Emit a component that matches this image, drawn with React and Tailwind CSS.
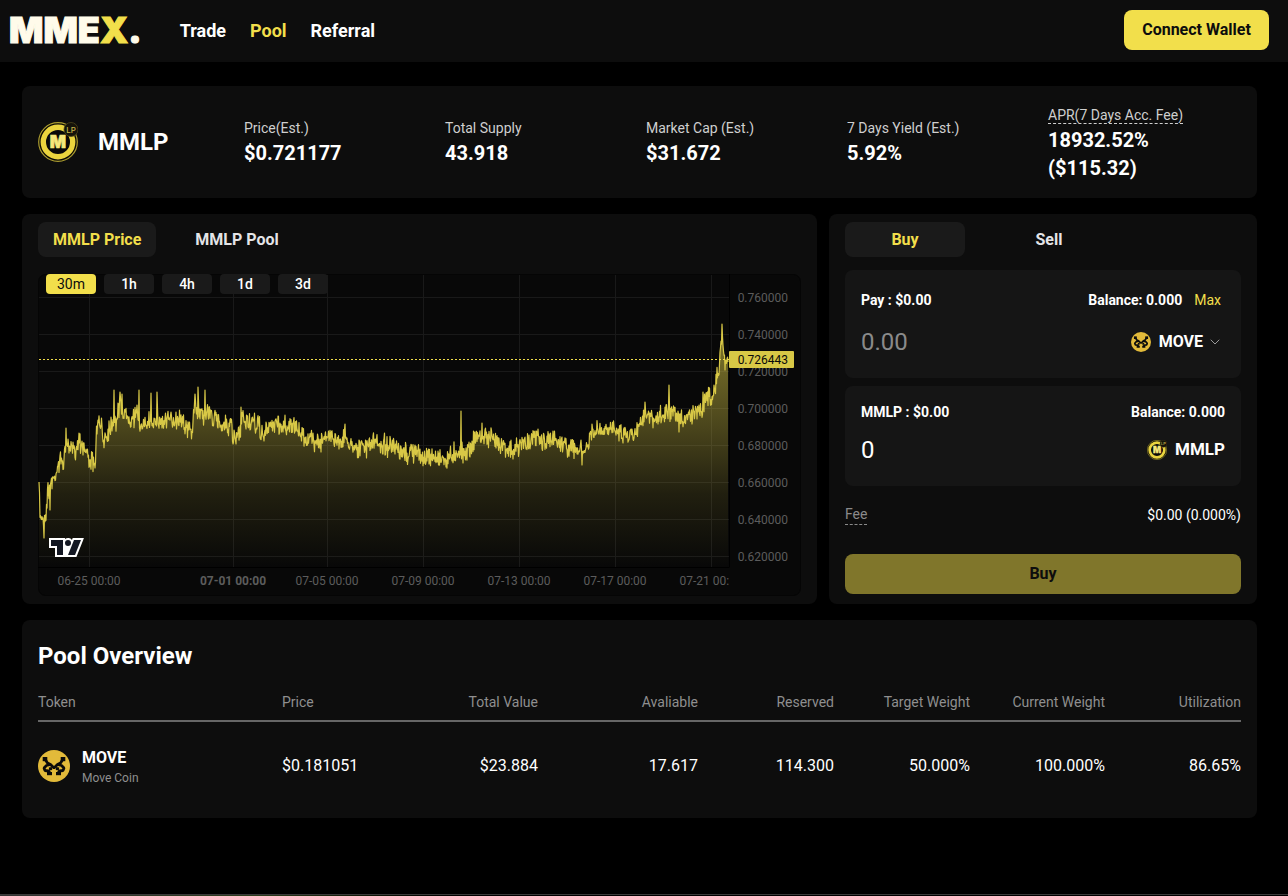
import React from "react";
import { ChevronDown } from "lucide-react";

// Price trend: [x, y] anchors in plot coordinates, y growing downwards.
const TREND = [
  [1, 210], [2, 240], [4, 242], [6, 252], [7, 240], [9, 232], [10, 212], [12, 222], [13, 208], [16, 206], [19, 194],
  [22, 188], [27, 184], [29, 168], [32, 174], [38, 174], [42, 166], [46, 174], [51, 184], [57, 194], [59, 150],
  [62, 152], [66, 164], [71, 154], [75, 146], [78, 148], [82, 132], [85, 138], [92, 145], [100, 142], [105, 157],
  [110, 149], [113, 145], [119, 144], [124, 148], [132, 147], [144, 144], [149, 156], [154, 154], [157, 134],
  [162, 138], [167, 140], [171, 138], [176, 146], [186, 149], [194, 153], [195, 166], [202, 162], [204, 146],
  [212, 148], [220, 152], [226, 162], [229, 156], [237, 148], [242, 153], [252, 150], [262, 158], [272, 166],
  [282, 166], [292, 162], [307, 167], [322, 174], [337, 168], [352, 172], [363, 180], [374, 178], [382, 180],
  [391, 184], [402, 182], [407, 186], [417, 177], [425, 179], [432, 173], [438, 163], [450, 163], [460, 167],
  [468, 172], [475, 178], [482, 170], [494, 166], [502, 166], [508, 170], [517, 164], [526, 170], [537, 176],
  [545, 178], [550, 172], [555, 158], [566, 158], [577, 152], [584, 158], [595, 160], [602, 148], [607, 138],
  [616, 148], [628, 139], [635, 140], [644, 146], [656, 138], [663, 134], [668, 124], [674, 126], [677, 110],
  [681, 98], [683, 70], [684, 60], [686, 80], [687, 88], [689, 84], [690, 86],
];
const SPIKES = {
  1: 208, 6: 264, 12: 236, 28: 154, 41: 159, 57: 194, 76: 116, 82: 118, 84: 120, 101: 116, 113: 119, 119: 118,
  157: 120, 160: 113, 167: 116, 195: 170, 203: 133, 226: 167, 283: 178, 307: 150, 391: 190, 423: 137, 425: 189,
  444: 149, 475: 185, 500: 155, 544: 191, 554: 150, 607: 128, 631: 111, 641: 158, 668: 119, 684: 50, 687: 96,
};

function buildLine() {
  let seed = 7;
  const rnd = () => {
    seed = (seed * 16807) % 2147483647;
    return seed / 2147483647;
  };
  const pts = [];
  let k = 0;
  for (let h = 2; h <= 1380; h++) {
    const x = h / 2;
    while (k < TREND.length - 2 && TREND[k + 1][0] < x) k++;
    const [x0, y0] = TREND[k];
    const [x1, y1] = TREND[k + 1];
    const mid = y0 + ((y1 - y0) * (x - x0)) / (x1 - x0);
    const amp = x > 680 ? 5 : 9;
    const r = rnd() + rnd() - 1;
    let y = mid + r * amp * 1.4;
    if (SPIKES[x] !== undefined) y = SPIKES[x];
    pts.push(x + "," + y.toFixed(1));
  }
  return pts;
}
const LINE = buildLine();

const PRICES = ["0.760000", "0.740000", "0.720000", "0.700000", "0.680000", "0.660000", "0.640000", "0.620000"];
const DATES = [
  [51, "06-25 00:00"], [195, "07-01 00:00"], [289, "07-05 00:00"], [385, "07-09 00:00"],
  [481, "07-13 00:00"], [577, "07-17 00:00"], [673, "07-21 00:00"],
];

function PriceChart() {
  return (
    <svg viewBox="0 0 763 322" className="block h-auto w-full font-['Roboto',sans-serif] text-[12px]" role="img" aria-label="MMLP price chart">
      <defs>
        <linearGradient id="area" x1="0" y1="50" x2="0" y2="293" gradientUnits="userSpaceOnUse">
          <stop offset="0" stopColor="#d8c846" stopOpacity="0.6" />
          <stop offset="0.45" stopColor="#d8c846" stopOpacity="0.3" />
          <stop offset="0.7" stopColor="#d8c846" stopOpacity="0.12" />
          <stop offset="1" stopColor="#d8c846" stopOpacity="0" />
        </linearGradient>
        <clipPath id="plot"><rect x="0" y="0" width="691" height="322" /></clipPath>
      </defs>
      <rect x="0.5" y="0.5" width="762" height="321" rx="7" fill="#080808" stroke="#050505" />
      {PRICES.map((p, i) => (
        <g key={p}>
          <path d={`M1 ${23.5 + i * 37}H691`} stroke="#191919" />
          <text x="750" y={28 + i * 37} textAnchor="end" fill="#5c5c5c">{p}</text>
        </g>
      ))}
      {DATES.map(([x]) => <path key={x} d={`M${x + 0.5} 1V293`} stroke="#191919" />)}
      <polygon points={`1,293 ${LINE.join(" ")} 690,293`} fill="url(#area)" />
      <polyline points={LINE.join(" ")} fill="none" stroke="#d8c846" strokeWidth="1.2" strokeLinejoin="round" />
      <path d="M1 85.5H691" stroke="#f0dd4b" strokeDasharray="2 2" />
      <path d="M691.5 0V293.5M0 293.5H691" stroke="#000" fill="none" />
      <g clipPath="url(#plot)" fill="#5c5c5c">
        {DATES.map(([x, d]) => (
          <text key={d} x={x} y="311" textAnchor="middle" fontWeight={d.startsWith("07-01") ? 700 : 400}>{d}</text>
        ))}
      </g>
      <rect x="691" y="77" width="65" height="17" rx="1" fill="#d8c846" />
      <text x="750" y="90" textAnchor="end" fill="#0a0a0a">0.726443</text>
      <g transform="translate(11 264)">
        <path fill="#fff" d="M2 0H0v10h6v9h21.4l.5-1.3 6-15 1-2.7H23.7l-.5 1.3-.2.6a5 5 0 0 0-7-.9V0H2Z" />
        <path fill="#131722" d="M14 2H2v6h6v9h6V2Zm12 15h-7l6-15h7l-6 15Zm-7-9a3 3 0 1 0 0-6 3 3 0 0 0 0 6Z" />
      </g>
    </svg>
  );
}

function MoveIcon({ className }) {
  return (
    <svg viewBox="0 0 32 32" className={className} aria-hidden="true">
      <circle cx="16" cy="16" r="16" fill="#e2ba3a" />
      <g fill="#0b0b0b">
        <rect x="4.7" y="7" width="4.6" height="4.2" />
        <rect x="22.7" y="7" width="4.6" height="4.2" />
        <rect x="9" y="22" width="5" height="3.2" />
        <rect x="18" y="22" width="5" height="3.2" />
      </g>
      <g fill="none" stroke="#0b0b0b" strokeWidth="2.8" strokeLinejoin="bevel">
        <path d="M7.5 10L9.5 13L12.5 14.500L16 18L19.500 14.500L22.500 13L24.500 10" />
        <path d="M12.500 14.500L8.500 15.500L6 18L7 20.500L10.500 21L12.500 23.500M11 19L14 18.500" />
        <path d="M19.500 14.500L23.500 15.500L26 18L25 20.500L21.500 21L19.500 23.500M21 19L18 18.500" />
      </g>
    </svg>
  );
}

function MmlpIcon({ className }) {
  return (
    <svg viewBox="0 0 40 40" className={className} aria-hidden="true">
      <circle cx="20" cy="20" r="19.3" fill="#0c0b04" stroke="#ab9c30" strokeWidth="1.2" />
      <circle cx="20" cy="20" r="14.7" fill="#090909" stroke="#ead43e" strokeWidth="5.4" />
      <text x="20" y="26" textAnchor="middle" fontSize="17" fontWeight="900" fill="#f5e77a" stroke="#f5e77a" strokeWidth="0.6" fontFamily="Inter, sans-serif">M</text>
      <circle cx="33" cy="7.5" r="7" fill="#15130a" stroke="#4c451c" strokeWidth="0.8" />
      <text x="33" y="10.5" textAnchor="middle" fontSize="8" fontWeight="500" fill="#c7b54a" fontFamily="Inter, sans-serif">LP</text>
    </svg>
  );
}

const STATS = [
  ["Price(Est.)", "$0.721177"],
  ["Total Supply", "43.918"],
  ["Market Cap (Est.)", "$31.672"],
  ["7 Days Yield (Est.)", "5.92%"],
];
const HEADERS = ["Token", "Price", "Total Value", "Avaliable", "Reserved", "Target Weight", "Current Weight", "Utilization"];
const VALUES = ["$0.181051", "$23.884", "17.617", "114.300", "50.000%", "100.000%", "86.65%"];

export default function App() {
  return (
    <div className="flex min-h-screen flex-col bg-black font-['Roboto','Liberation_Sans',sans-serif] text-white">
      <header className="flex h-[62px] items-center bg-[#0d0d0d] pr-[19px] pb-0.5 pl-[9px]">
        <a href="#home" className="font-['Inter',sans-serif] text-[36px] leading-none font-black text-[#fffbea] [-webkit-text-stroke:1px]">
          MME<span className="text-[#f2df4b]">X</span>.
        </a>
        <nav className="ml-[38px] flex gap-6 text-[18px] font-bold">
          <a href="#trade">Trade</a>
          <a href="#pool" className="text-[#f2df4b]">Pool</a>
          <a href="#referral">Referral</a>
        </nav>
        <button className="ml-auto h-10 w-[145px] rounded-lg bg-[#f2df4b] text-base font-bold text-[#0d0d0d]">Connect Wallet</button>
      </header>

      <main className="flex flex-col gap-4 pt-6 pr-[31px] pl-[22px]">
        <section className="flex h-28 items-center rounded-lg bg-[#0d0d0d] pr-2 pl-4">
          <div className="flex w-[206px] shrink-0 items-center gap-5">
            <MmlpIcon className="size-10" />
            <h1 className="text-2xl font-bold">MMLP</h1>
          </div>
          <dl className="grid flex-1 grid-cols-5 items-center">
            {STATS.map(([label, value]) => (
              <div key={label}>
                <dt className="text-sm leading-[22px] text-[#cfcfcf]">{label}</dt>
                <dd className="text-xl leading-7 font-bold">{value}</dd>
              </div>
            ))}
            <div className="pt-0.5">
              <dt className="text-sm leading-[22px] text-[#cfcfcf]">
                <span className="border-b border-dashed border-[#cfcfcf]">APR(7 Days Acc. Fee)</span>
              </dt>
              <dd className="text-xl leading-7 font-bold">18932.52%<br />($115.32)</dd>
            </div>
          </dl>
        </section>

        <div className="flex gap-3">
          <section className="min-w-0 flex-1 rounded-lg bg-[#0d0d0d] px-4 pt-2">
            <div className="flex gap-6 text-base font-bold">
              <button className="h-[35px] rounded-lg bg-[#1a1a1a] px-[15px] text-[#f2df4b]">MMLP Price</button>
              <button className="h-[35px] px-[15px] text-[#e4e4e7]">MMLP Pool</button>
            </div>
            <div className="relative mt-[17px]">
              <PriceChart />
              <div className="absolute top-0 left-2 flex gap-2 text-sm font-medium">
                <button className="h-5 w-[50px] rounded-sm bg-[#f2df4b] font-normal text-[#0d0d0d]">30m</button>
                {["1h", "4h", "1d", "3d"].map((t) => (
                  <button key={t} className="h-5 w-[50px] rounded-sm bg-[#1a1a1a]">{t}</button>
                ))}
              </div>
            </div>
          </section>

          <section className="w-[428px] shrink-0 rounded-lg bg-[#0d0d0d] px-4 pt-2 pb-[10px]">
            <div className="flex gap-6 text-base font-bold">
              <button className="h-[35px] w-[120px] rounded-lg bg-[#1a1a1a] text-[#f2df4b]">Buy</button>
              <button className="h-[35px] w-[120px] text-[#e4e4e7]">Sell</button>
            </div>
            <div className="mt-[13px] h-[108px] rounded-lg bg-[#151515] px-4 pt-5">
              <div className="flex text-sm leading-5 font-bold">
                <label htmlFor="pay">Pay : $0.00</label>
                <span className="ml-auto">Balance: 0.000</span>
                <button className="mr-1 ml-3 font-normal text-[#f2df4b]">Max</button>
              </div>
              <div className="mt-4 flex h-8 items-center">
                <input id="pay" placeholder="0.00" className="w-0 flex-1 bg-transparent text-2xl outline-none placeholder:text-[#8a8a8a]" />
                <button className="mr-0.5 flex items-center text-base font-bold">
                  <MoveIcon className="mr-2 size-5" />MOVE
                  <ChevronDown className="ml-1 size-4 text-[#9a9a9a]" strokeWidth={1.5} />
                </button>
              </div>
            </div>
            <div className="mt-2 h-[100px] rounded-lg bg-[#151515] px-4 pt-4">
              <div className="flex justify-between text-sm leading-5 font-bold">
                <label htmlFor="receive">MMLP : $0.00</label>
                <span>Balance: 0.000</span>
              </div>
              <div className="mt-3 flex h-8 items-center">
                <input id="receive" defaultValue="0" className="w-0 flex-1 bg-transparent text-2xl outline-none" />
                <MmlpIcon className="mr-2 size-5" />
                <span className="text-[17px] font-bold">MMLP</span>
              </div>
            </div>
            <div className="mt-[18px] flex items-center justify-between text-sm leading-5">
              <span className="border-b border-dashed border-[#8a8a8a] text-[#8a8a8a]">Fee</span>
              <span>$0.00 (0.000%)</span>
            </div>
            <button className="mt-[29px] h-10 w-full rounded-lg bg-[#80762b] text-base font-bold text-[#0d0d0d]">Buy</button>
          </section>
        </div>

        <section className="rounded-lg bg-[#0d0d0d] px-4 pt-5 pb-[9px]">
          <h2 className="text-2xl leading-8 font-bold">Pool Overview</h2>
          <table className="mt-3 w-full table-fixed">
            <colgroup>
              <col className="w-[244px]" /><col className="w-[120px]" /><col className="w-[136px]" /><col className="w-[160px]" />
              <col className="w-[136px]" /><col className="w-[136px]" /><col className="w-[135px]" /><col className="w-[136px]" />
            </colgroup>
            <thead>
              <tr className="h-[37px] border-b-2 border-[#666666] text-sm text-[#8f8f8f]">
                {HEADERS.map((h, i) => (
                  <th key={h} className={i < 2 ? "text-left font-normal" : "text-right font-normal"}>{h}</th>
                ))}
              </tr>
            </thead>
            <tbody>
              <tr className="h-[88px]">
                <td>
                  <div className="flex items-center gap-3">
                    <MoveIcon className="size-8" />
                    <div>
                      <div className="text-base leading-6 font-bold">MOVE</div>
                      <div className="text-xs leading-4 text-[#8f8f8f]">Move Coin</div>
                    </div>
                  </div>
                </td>
                {VALUES.map((v, i) => (
                  <td key={v} className={i < 1 ? "text-left" : "text-right"}>{v}</td>
                ))}
              </tr>
            </tbody>
          </table>
        </section>
      </main>
      <footer className="mt-auto border-t border-[#3a3a3a]">
        <div className="h-px w-2/5 bg-linear-to-r from-[#333333] via-[#2c3d1c] to-black" />
      </footer>
    </div>
  );
}
